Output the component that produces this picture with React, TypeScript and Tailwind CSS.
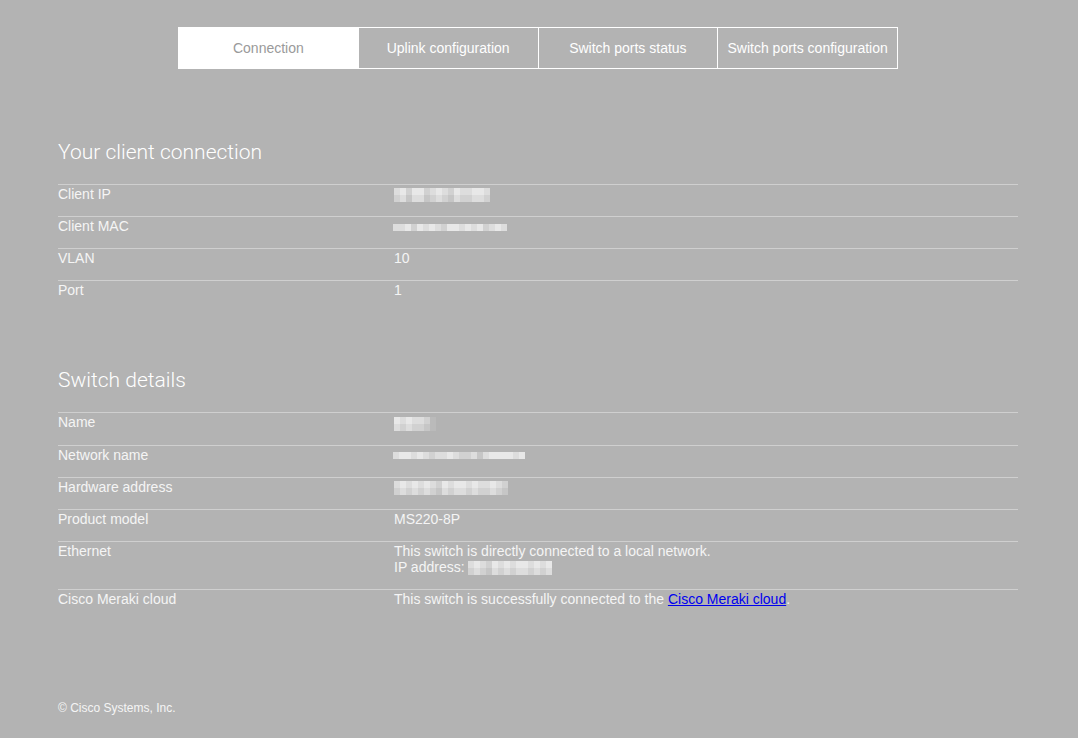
import React from "react";

// blurred / pixelated placeholder, like a redacted value
function Redacted({ pattern, rows = 2 }: { pattern: string; rows?: number }) {
  const shades = ["bg-white/10", "bg-white/25", "bg-white/40", "bg-white/55", "bg-white/70"];
  const lines = Array.from({ length: rows }, (_, r) => r);
  return (
    <span className="inline-flex flex-col align-middle blur-[0.6px]">
      {lines.map((r) => (
        <span key={r} className="flex">
          {pattern.split("").map((c, i) => {
            const n = parseInt(c, 10) + (r === 1 ? -1 : 0);
            const cls = shades[Math.max(0, Math.min(4, n))];
            return <span key={i} className={"w-[6px] h-[7px] " + cls} />;
          })}
        </span>
      ))}
    </span>
  );
}

function Row({ label, children }: { label: string; children: React.ReactNode }) {
  return (
    <div className="flex border-t border-[#cfcfcf] pt-[1px] pb-[14px] leading-4 text-[14px]">
      <div className="w-[336px] shrink-0">{label}</div>
      <div className="flex-1">{children}</div>
    </div>
  );
}

const tabs = ["Connection", "Uplink configuration", "Switch ports status", "Switch ports configuration"];

export default function App() {
  return (
    <div
      className="min-h-[738px] bg-[#b3b3b3] text-[#f5f5f5]"
      style={{ fontFamily: '"Liberation Sans", Arial, sans-serif' }}
    >
      <div className="flex justify-center pt-[27px] pr-[2px]">
        <div className="flex w-[720px] border border-white">
          {tabs.map((t, i) => (
            <div
              key={t}
              className={
                "flex-1 h-[40px] flex items-center justify-center text-[14px] " +
                (i === 0 ? "bg-white text-[#9a9a9a]" : "border-l border-white text-white")
              }
            >
              {t}
            </div>
          ))}
        </div>
      </div>

      <div className="pl-[58px] pr-[60px] pt-[71px]">
        <h2 className="text-[21px] font-light leading-6 text-white mb-[20px]" style={{ fontFamily: '"Helvetica Neue", Roboto, sans-serif' }}>
          Your client connection
        </h2>
        <Row label="Client IP">
          <Redacted pattern="3424423432433443" />
        </Row>
        <Row label="Client MAC">
          <span className="ml-[-1px]">
            <Redacted pattern="3342434324434342343" rows={1} />
          </span>
        </Row>
        <Row label="VLAN">10</Row>
        <Row label="Port">1</Row>

        <h2 className="text-[21px] font-light leading-6 text-white mt-[56px] mb-[20px]" style={{ fontFamily: '"Helvetica Neue", Roboto, sans-serif' }}>
          Switch details
        </h2>
        <Row label="Name">
          <Redacted pattern="4343320" />
        </Row>
        <Row label="Network name">
          <span className="ml-[-1px]">
            <Redacted pattern="3443432334322313444434" rows={1} />
          </span>
        </Row>
        <Row label="Hardware address">
          <Redacted pattern="3434343243443433432" />
        </Row>
        <Row label="Product model">MS220-8P</Row>
        <Row label="Ethernet">
          <div>This switch is directly connected to a local network.</div>
          <div>
            IP address: <Redacted pattern="34324343443434" />
          </div>
        </Row>
        <Row label="Cisco Meraki cloud">
          This switch is successfully connected to the{" "}
          <a href="#" className="text-[#0000ee] underline">
            Cisco Meraki cloud
          </a>
          .
        </Row>

        <div className="text-[12px] mt-[78px] pb-[24px]">© Cisco Systems, Inc.</div>
      </div>
    </div>
  );
}
